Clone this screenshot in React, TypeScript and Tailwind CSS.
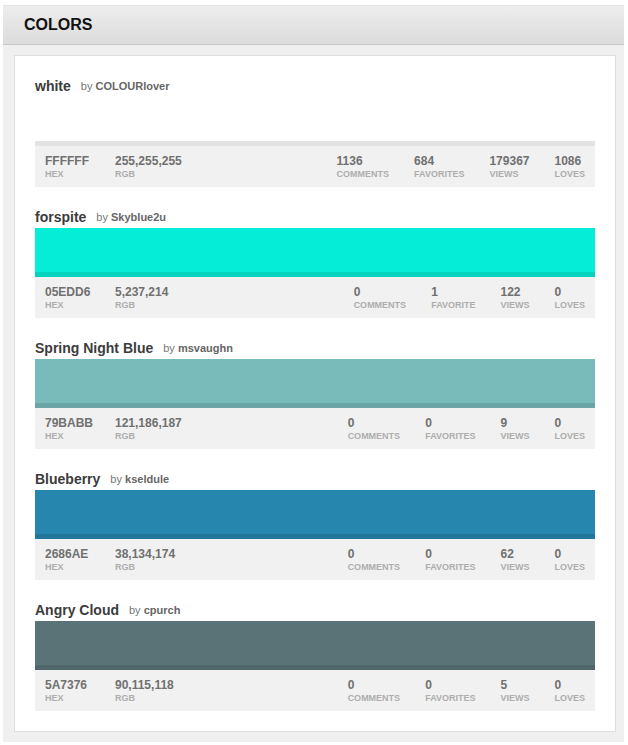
type Swatch = {
  title: string;
  author: string;
  hex: string;
  rgb: string;
  comments: number;
  favorites: number;
  views: number;
  loves: number;
  bg: string;
};

const swatches: Swatch[] = [
  { title: 'white', author: 'COLOURlover', hex: 'FFFFFF', rgb: '255,255,255', comments: 1136, favorites: 684, views: 179367, loves: 1086, bg: 'bg-[#ffffff]' },
  { title: 'forspite', author: 'Skyblue2u', hex: '05EDD6', rgb: '5,237,214', comments: 0, favorites: 1, views: 122, loves: 0, bg: 'bg-[#05edd6]' },
  { title: 'Spring Night Blue', author: 'msvaughn', hex: '79BABB', rgb: '121,186,187', comments: 0, favorites: 0, views: 9, loves: 0, bg: 'bg-[#79babb]' },
  { title: 'Blueberry', author: 'kseldule', hex: '2686AE', rgb: '38,134,174', comments: 0, favorites: 0, views: 62, loves: 0, bg: 'bg-[#2686ae]' },
  { title: 'Angry Cloud', author: 'cpurch', hex: '5A7376', rgb: '90,115,118', comments: 0, favorites: 0, views: 5, loves: 0, bg: 'bg-[#5a7376]' },
];

function Stat({ value, label }: { value: string | number; label: string }) {
  return (
    <div className="flex flex-col">
      <span className="text-[12px] leading-[14px] font-bold text-[#707070]">{value}</span>
      <span className="text-[9px] leading-[13px] font-bold uppercase text-[#adadad]">{label}</span>
    </div>
  );
}

function SwatchRow({ swatch }: { swatch: Swatch }) {
  return (
    <div className="mb-[20px] last:mb-0">
      {/* title line */}
      <div className="flex items-center h-[21px]">
        <span className="text-[14px] font-bold text-[#3c3c3c]">{swatch.title}</span>
        <span className="ml-[10px] text-[11px] text-[#777]">
          by <span className="font-bold text-[#666]">{swatch.author}</span>
        </span>
      </div>

      {/* color block with darker bottom edge */}
      <div className={`h-[49px] border-b-[5px] border-black/[0.11] ${swatch.bg}`} />

      {/* details */}
      <div className="flex h-[41px] pt-[8px] pl-[10px] pr-[10px] bg-[#f1f1f1]">
        <div className="w-[70px]">
          <Stat value={swatch.hex} label="Hex" />
        </div>
        <Stat value={swatch.rgb} label="RGB" />
        <div className="ml-auto flex gap-[25px]">
          <Stat value={swatch.comments} label="Comments" />
          <Stat value={swatch.favorites} label={swatch.favorites === 1 ? 'Favorite' : 'Favorites'} />
          <Stat value={swatch.views} label="Views" />
          <Stat value={swatch.loves} label="Loves" />
        </div>
      </div>
    </div>
  );
}

export default function App() {
  return (
    <div className="bg-white min-h-[745px] pt-[5px] pl-[3px] font-['Liberation_Sans',Arial,sans-serif]">
      <div className="w-[621px]">
        <div className="h-[40px] flex items-center pl-[21px] bg-linear-to-b from-[#ededed] to-[#dcdcdc] border-t border-t-[#e3e3e3] border-b border-b-[#c6c6c6]">
          <h1 className="text-[16px] font-bold text-[#111]">COLORS</h1>
        </div>
        <div className="bg-[#f0f0f0] pl-[11px] pr-[8px] pt-[10px] pb-[10px]">
          <div className="bg-white border border-[#dedede] p-[20px]">
            {swatches.map((s) => (
              <SwatchRow key={s.hex} swatch={s} />
            ))}
          </div>
        </div>
      </div>
    </div>
  );
}
